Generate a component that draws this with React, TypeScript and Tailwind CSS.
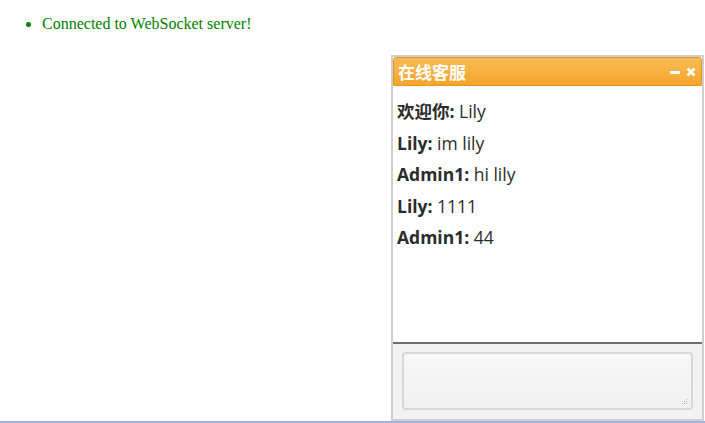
export default function App() {
  const messages = [
    { name: "欢迎你:", text: "Lily" },
    { name: "Lily:", text: "im lily" },
    { name: "Admin1:", text: "hi lily" },
    { name: "Lily:", text: "1111" },
    { name: "Admin1:", text: "44" },
  ];

  return (
    <div className="relative h-[423px] w-[705px] overflow-hidden bg-white">
      <ul className="list-disc pl-[42px] pt-[12px] text-[16px] text-[#008000] marker:text-[#008000] [font-family:'Liberation_Serif',serif]">
        <li>Connected to WebSocket server!</li>
      </ul>

      {/* floating chat widget */}
      <div className="absolute left-[391px] top-[55px] flex h-[366px] w-[313px] flex-col border-2 border-[#cfcfcf] bg-white">
        <div className="flex h-[29px] items-center justify-between rounded-t-[3px] border border-[#e9971a] bg-gradient-to-b from-[#f8bb55] to-[#f5a52a] pl-[4px] pr-[5px]">
          <span className="text-[17px] font-bold text-white [font-family:'Noto_Sans_CJK_SC',sans-serif]">在线客服</span>
          <div className="flex items-center gap-[6px] text-white">
            <svg width="10" height="10" viewBox="0 0 10 10">
              <rect x="0" y="4" width="10" height="3" fill="white" />
            </svg>
            <svg width="10" height="10" viewBox="0 0 10 10">
              <path d="M1.5 1.5 L8.5 8.5 M8.5 1.5 L1.5 8.5" stroke="white" strokeWidth="2.6" />
            </svg>
          </div>
        </div>

        <div className="flex-1 pl-[4px] pt-[14px] text-[17.5px] text-[#2b2b2b] [font-family:'Open_Sans','Noto_Sans_CJK_SC',sans-serif]">
          {messages.map((m, i) => (
            <div key={i} className="h-[31.5px] leading-[22px]">
              <span className="font-bold">{m.name}</span> {m.text}
            </div>
          ))}
        </div>

        <div className="border-t-2 border-[#6e6e6e] bg-[#f2f2f2] px-[9px] pb-[9px] pt-[8px]">
          <div className="relative h-[58px] rounded-[4px] border-2 border-[#d8d8d8] bg-gradient-to-b from-[#f7f7f7] to-[#f1f1f1]">
            <svg className="absolute bottom-[3px] right-[3px]" width="7" height="7" viewBox="0 0 7 7">
              <g fill="#b0b0b0">
                <rect x="5" y="1" width="1" height="1" />
                <rect x="3" y="3" width="1" height="1" />
                <rect x="5" y="3" width="1" height="1" />
                <rect x="1" y="5" width="1" height="1" />
                <rect x="3" y="5" width="1" height="1" />
                <rect x="5" y="5" width="1" height="1" />
              </g>
            </svg>
          </div>
        </div>
      </div>

      <div className="absolute bottom-0 left-0 h-[2px] w-full bg-[#9fb6d8]" />
    </div>
  );
}
